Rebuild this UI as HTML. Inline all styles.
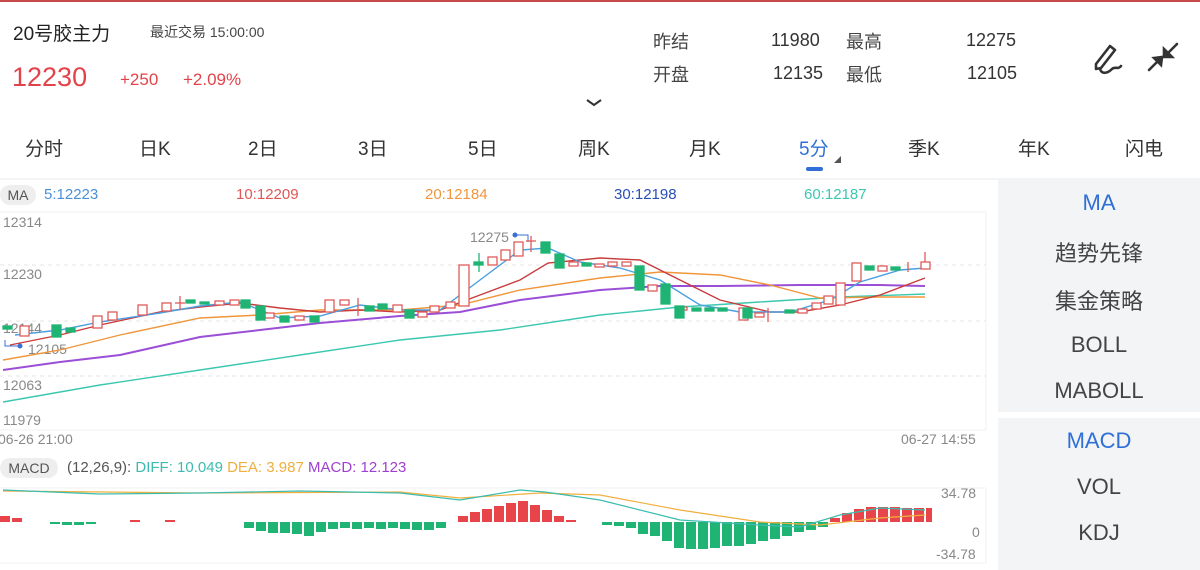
<!DOCTYPE html>
<html><head><meta charset="utf-8">
<style>
*{margin:0;padding:0;box-sizing:border-box}
body{width:1200px;height:570px;overflow:hidden;background:#fff;font-family:"Liberation Sans","Noto Sans CJK SC",sans-serif;color:#333;position:relative}
.a{position:absolute;white-space:nowrap}
.tab{position:absolute;top:134px;font-size:19px;color:#333}
.rp{position:absolute;left:998px;width:202px;background:#f3f4f6}
.ri{position:absolute;width:202px;text-align:center;font-size:22px;color:#444}
</style></head><body>
<div class="a" style="left:0;top:0;width:1200px;height:2px;background:#c9494a"></div>
<div class="a" style="left:13px;top:19px;font-size:19px;color:#222">20号胶主力</div>
<div class="a" style="left:150px;top:22px;font-size:14px;color:#444">最近交易 15:00:00</div>
<div class="a" style="left:12px;top:62px;font-size:27px;color:#e2434b">12230</div>
<div class="a" style="left:120px;top:70px;font-size:17px;color:#e2434b">+250</div>
<div class="a" style="left:183px;top:70px;font-size:17px;color:#e2434b">+2.09%</div>
<svg class="a" style="left:585px;top:98px" width="18" height="10"><path d="M2 2 L9 7 L16 2" fill="none" stroke="#333" stroke-width="2"/></svg>
<div class="a" style="left:653px;top:28px;font-size:18px;color:#444">昨结</div>
<div class="a" style="left:771px;top:30px;font-size:18px;color:#333">11980</div>
<div class="a" style="left:846px;top:28px;font-size:18px;color:#444">最高</div>
<div class="a" style="left:966px;top:30px;font-size:18px;color:#333">12275</div>
<div class="a" style="left:653px;top:61px;font-size:18px;color:#444">开盘</div>
<div class="a" style="left:773px;top:63px;font-size:18px;color:#333">12135</div>
<div class="a" style="left:846px;top:61px;font-size:18px;color:#444">最低</div>
<div class="a" style="left:967px;top:63px;font-size:18px;color:#333">12105</div>
<svg class="a" style="left:1088px;top:38px" width="100" height="40" viewBox="0 0 100 40">
<g fill="none" stroke="#333" stroke-width="2.6" stroke-linejoin="round" stroke-linecap="round">
<path d="M8 26 L22 8 L27 12 L13 30 L8 31 Z"/>
<path d="M12 31 C14 37 20 35 24 31 C27 28 30 32 33 28"/>
</g>
<g fill="#333" stroke="#333" stroke-width="2.6" stroke-linecap="round">
<path d="M61 32 L70 23"/><path d="M66 20 L74 19 L73 27 Z"/>
<path d="M89 6 L80 15"/><path d="M76 11 L76 19 L84 19 Z"/>
</g></svg>
<div class="tab" style="left:25px">分时</div>
<div class="tab" style="left:139px">日K</div>
<div class="tab" style="left:248px">2日</div>
<div class="tab" style="left:358px">3日</div>
<div class="tab" style="left:468px">5日</div>
<div class="tab" style="left:578px">周K</div>
<div class="tab" style="left:689px">月K</div>
<div class="tab" style="left:799px;color:#2f6fd6">5分</div>
<div class="a" style="left:834px;top:156px;width:0;height:0;border-left:7px solid transparent;border-bottom:7px solid #555"></div>
<div class="a" style="left:806px;top:167px;width:17px;height:4px;border-radius:2px;background:#2f6fd6"></div>
<div class="tab" style="left:908px">季K</div>
<div class="tab" style="left:1018px">年K</div>
<div class="tab" style="left:1125px">闪电</div>
<div class="a" style="left:0;top:178px;width:1200px;height:2px;background:#f3f4f6"></div>

<div class="a" style="left:0;top:185px;width:36px;height:20px;border-radius:10px;background:#eee;font-size:14px;color:#555;text-align:center;line-height:20px">MA</div>
<div class="a" style="left:44px;top:186px;font-size:15px;color:#4a90d9">5:12223</div>
<div class="a" style="left:236px;top:186px;font-size:15px;color:#e05555">10:12209</div>
<div class="a" style="left:425px;top:186px;font-size:15px;color:#f0963c">20:12184</div>
<div class="a" style="left:614px;top:186px;font-size:15px;color:#2a4fb8">30:12198</div>
<div class="a" style="left:804px;top:186px;font-size:15px;color:#3cc8b0">60:12187</div>

<svg class="a" style="left:0;top:180px" width="990" height="390" viewBox="0 180 990 390">
<g stroke="#f2f2f2" stroke-width="1"><line x1="0" y1="212" x2="986" y2="212"/><line x1="0" y1="430" x2="986" y2="430"/><line x1="986" y1="212" x2="986" y2="430"/>
<line x1="0" y1="488" x2="986" y2="488"/><line x1="0" y1="563" x2="986" y2="563"/><line x1="986" y1="488" x2="986" y2="563"/></g>
<g stroke="#e6e6e6" stroke-dasharray="4 4"><line x1="0" y1="265" x2="986" y2="265"/><line x1="0" y1="321" x2="986" y2="321"/><line x1="0" y1="376" x2="986" y2="376"/></g>
<g font-size="14" fill="#888" font-family="Liberation Sans,sans-serif">
<text x="3" y="227">12314</text><text x="3" y="279">12230</text><text x="3" y="390">12063</text><text x="3" y="425">11979</text>
<text x="-2" y="444">06-26 21:00</text><text x="901" y="444">06-27 14:55</text>
<text x="470" y="242">12275</text><text x="28" y="354">12105</text><text x="3" y="333">12144</text>
<text x="941" y="498">34.78</text><text x="972" y="537">0</text><text x="936" y="559">-34.78</text>
</g>
<path d="M515 235 H528 V242" stroke="#3a6fd6" fill="none"/><circle cx="515" cy="235" r="2.5" fill="#3a6fd6"/>
<path d="M5 340 V346 H20" stroke="#3a6fd6" fill="none"/><circle cx="20" cy="346" r="2.5" fill="#3a6fd6"/>
<g fill="none" stroke-width="1.4">
<polyline stroke="#3cc8b0" points="3,402 100,385 200,370 300,355 400,340 500,330 600,315 680,307 760,302 840,297 925,294"/>
<polyline stroke="#9b4fd6" stroke-width="2" points="3,370 60,362 120,355 200,337 260,330 320,323 400,316 460,312 520,300 600,290 660,286 720,286 800,285 880,285 925,286"/>
<polyline stroke="#f0963c" points="3,360 60,350 120,335 200,318 260,315 320,310 400,310 460,305 520,290 600,278 660,272 720,275 770,285 820,298 880,297 925,297"/>
<polyline stroke="#c83c3c" points="10,345 60,335 100,325 160,312 200,307 240,303 280,308 320,312 360,310 400,312 440,310 480,295 520,280 548,263 600,258 640,260 680,280 720,300 770,312 800,312 840,305 880,295 925,278"/>
<polyline stroke="#4a9fe0" points="15,335 60,330 100,322 160,313 200,306 240,302 280,318 320,316 360,305 400,310 440,310 480,280 520,250 548,248 580,262 620,268 660,280 700,305 740,312 790,312 830,300 860,282 900,270 925,268"/>
</g>
<g stroke="#e05a5a" fill="#fff" stroke-width="1.3">
<rect x="20" y="326" width="9" height="10"/><rect x="93" y="316" width="9" height="12"/><rect x="108" y="312" width="9" height="8"/><rect x="138" y="305" width="9" height="10"/><rect x="162" y="303" width="9" height="8"/><line x1="180" y1="296" x2="180" y2="310"/><line x1="175" y1="303" x2="185" y2="303"/><rect x="215" y="301" width="9" height="4"/><rect x="230" y="300" width="9" height="5"/>
<rect x="265" y="313" width="9" height="5"/><rect x="295" y="316" width="9" height="4"/><rect x="325" y="300" width="9" height="12"/><rect x="340" y="300" width="9" height="5"/><line x1="358" y1="298" x2="358" y2="316"/><rect x="393" y="305" width="9" height="7"/><rect x="418" y="312" width="9" height="5"/><rect x="430" y="306" width="9" height="6"/><rect x="446" y="302" width="9" height="6"/>
<rect x="459" y="265" width="10" height="41"/><rect x="488" y="257" width="9" height="8"/><rect x="501" y="250" width="9" height="10"/><rect x="514" y="242" width="9" height="14"/><line x1="531" y1="236" x2="531" y2="252"/><line x1="526" y1="241" x2="536" y2="241"/>
<rect x="569" y="262" width="9" height="4"/><rect x="595" y="264" width="9" height="3"/><rect x="608" y="262" width="9" height="4"/><rect x="622" y="262" width="9" height="4"/>
<rect x="648" y="285" width="9" height="6"/><rect x="678" y="307" width="9" height="3"/><rect x="739" y="308" width="9" height="12"/><rect x="755" y="313" width="9" height="4"/><line x1="768" y1="308" x2="768" y2="322"/><rect x="798" y="309" width="9" height="4"/>
<rect x="812" y="303" width="9" height="6"/><rect x="824" y="296" width="9" height="8"/><rect x="836" y="283" width="9" height="22"/><rect x="852" y="263" width="9" height="18"/><rect x="878" y="266" width="9" height="5"/><line x1="908" y1="262" x2="908" y2="272"/><rect x="921" y="262" width="9" height="7"/><line x1="925" y1="252" x2="925" y2="262"/>
</g>
<g fill="#1fb474" stroke="#1fb474" stroke-width="1.3">
<rect x="3" y="326" width="9" height="3"/><rect x="52" y="325" width="9" height="12"/><rect x="66" y="328" width="9" height="4"/><rect x="186" y="300" width="9" height="3"/><rect x="200" y="302" width="9" height="2"/><rect x="241" y="300" width="9" height="8"/><rect x="256" y="306" width="9" height="14"/><rect x="280" y="316" width="9" height="6"/><rect x="310" y="316" width="9" height="6"/>
<rect x="365" y="306" width="9" height="5"/><rect x="378" y="304" width="9" height="5"/><rect x="405" y="310" width="9" height="8"/><rect x="474" y="262" width="9" height="3"/><line x1="479" y1="253" x2="479" y2="272"/><rect x="541" y="242" width="9" height="11"/><rect x="555" y="254" width="9" height="14"/><rect x="582" y="263" width="9" height="3"/>
<rect x="635" y="266" width="9" height="24"/><rect x="661" y="284" width="9" height="20"/><rect x="675" y="306" width="9" height="12"/><rect x="692" y="308" width="9" height="3"/><rect x="705" y="308" width="9" height="3"/><rect x="718" y="308" width="9" height="3"/><rect x="743" y="308" width="9" height="10"/><rect x="785" y="310" width="9" height="3"/>
<rect x="865" y="266" width="9" height="4"/><rect x="891" y="267" width="9" height="3"/>
</g>
<g fill="#e8454b">
<rect x="0" y="516" width="10" height="6"/><rect x="12" y="518" width="10" height="4"/><rect x="130" y="520" width="10" height="2"/><rect x="165" y="520" width="10" height="2"/>
<rect x="458" y="516" width="10" height="6"/><rect x="470" y="512" width="10" height="10"/><rect x="482" y="509" width="10" height="13"/><rect x="494" y="506" width="10" height="16"/><rect x="506" y="503" width="10" height="19"/><rect x="518" y="501" width="10" height="21"/><rect x="530" y="505" width="10" height="17"/><rect x="542" y="510" width="10" height="12"/><rect x="554" y="516" width="10" height="6"/><rect x="566" y="520" width="10" height="2"/>
<rect x="830" y="518" width="10" height="4"/><rect x="842" y="513" width="10" height="9"/><rect x="854" y="509" width="10" height="13"/><rect x="866" y="507" width="10" height="15"/><rect x="878" y="507" width="10" height="15"/><rect x="890" y="507" width="10" height="15"/><rect x="902" y="508" width="10" height="14"/><rect x="914" y="508" width="10" height="14"/><rect x="926" y="508" width="6" height="14"/>
</g>
<g fill="#1fb474">
<rect x="50" y="522" width="10" height="2"/><rect x="62" y="522" width="10" height="3"/><rect x="74" y="522" width="10" height="3"/><rect x="86" y="522" width="10" height="2"/>
<rect x="244" y="522" width="10" height="6"/><rect x="256" y="522" width="10" height="9"/><rect x="268" y="522" width="10" height="11"/><rect x="280" y="522" width="10" height="11"/><rect x="292" y="522" width="10" height="12"/><rect x="304" y="522" width="10" height="14"/><rect x="316" y="522" width="10" height="10"/><rect x="328" y="522" width="10" height="7"/><rect x="340" y="522" width="10" height="6"/><rect x="352" y="522" width="10" height="7"/><rect x="364" y="522" width="10" height="6"/><rect x="376" y="522" width="10" height="7"/><rect x="388" y="522" width="10" height="6"/><rect x="400" y="522" width="10" height="7"/><rect x="412" y="522" width="10" height="8"/><rect x="424" y="522" width="10" height="8"/><rect x="436" y="522" width="10" height="6"/>
<rect x="602" y="522" width="10" height="3"/><rect x="614" y="522" width="10" height="4"/><rect x="626" y="522" width="10" height="6"/><rect x="638" y="522" width="10" height="12"/><rect x="650" y="522" width="10" height="14"/><rect x="662" y="522" width="10" height="19"/><rect x="674" y="522" width="10" height="26"/><rect x="686" y="522" width="10" height="27"/><rect x="698" y="522" width="10" height="27"/><rect x="710" y="522" width="10" height="26"/><rect x="722" y="522" width="10" height="24"/><rect x="734" y="522" width="10" height="24"/><rect x="746" y="522" width="10" height="22"/><rect x="758" y="522" width="10" height="19"/><rect x="770" y="522" width="10" height="17"/><rect x="782" y="522" width="10" height="14"/><rect x="794" y="522" width="10" height="10"/><rect x="806" y="522" width="10" height="8"/><rect x="818" y="522" width="10" height="5"/>
</g>
<g fill="none" stroke-width="1.2">
<polyline stroke="#f0b040" points="3,491 200,493 400,492 460,498 540,493 600,495 680,510 760,522 820,525 880,518 925,515"/>
<polyline stroke="#3cbcb0" points="3,490 100,494 200,493 300,491 400,493 460,500 520,490 545,492 600,500 680,520 760,525 800,527 840,515 880,508 925,510"/>
</g>
</svg>

<div class="a" style="left:0;top:458px;width:58px;height:20px;border-radius:10px;background:#eee;font-size:14px;color:#555;text-align:center;line-height:20px">MACD</div>
<div class="a" style="left:67px;top:459px;font-size:15px;color:#555">(12,26,9): <span style="color:#3cbcb0">DIFF: 10.049</span> <span style="color:#f0b040">DEA: 3.987</span> <span style="color:#a040d0">MACD: 12.123</span></div>

<div class="rp" style="top:180px;height:232px"></div>
<div class="rp" style="top:418px;height:152px"></div>
<div class="ri" style="left:998px;top:190px;color:#2f6fd6">MA</div>
<div class="ri" style="left:998px;top:236px">趋势先锋</div>
<div class="ri" style="left:998px;top:284px">集金策略</div>
<div class="ri" style="left:998px;top:332px">BOLL</div>
<div class="ri" style="left:998px;top:378px">MABOLL</div>
<div class="ri" style="left:998px;top:428px;color:#2f6fd6">MACD</div>
<div class="ri" style="left:998px;top:474px">VOL</div>
<div class="ri" style="left:998px;top:520px">KDJ</div>
</body></html>
